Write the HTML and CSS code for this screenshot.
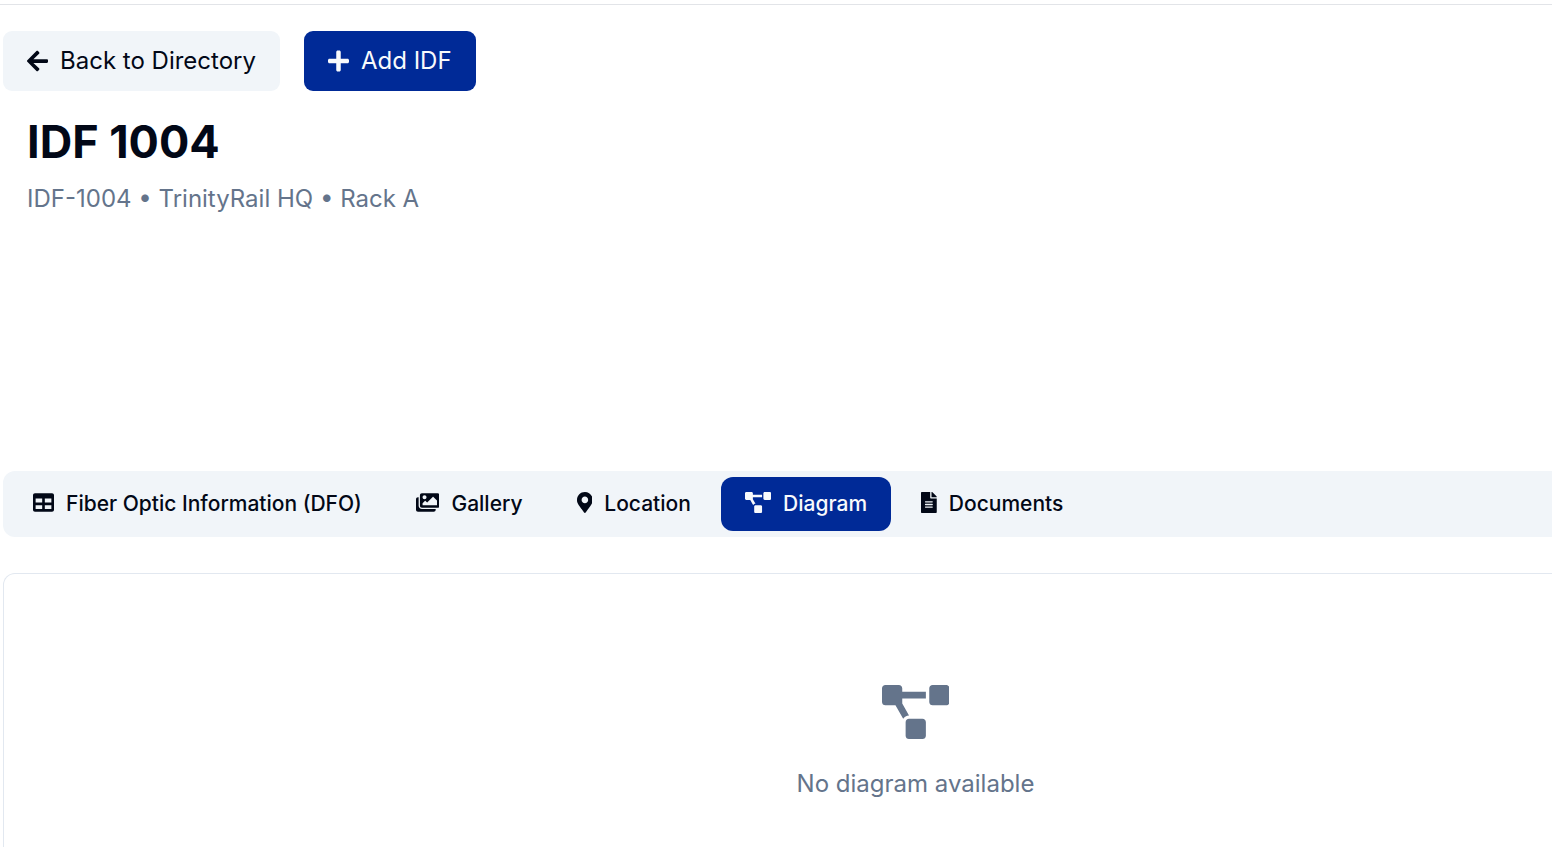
FILE: index.html
```html
<!DOCTYPE html>
<html lang="en">
<head>
<meta charset="utf-8">
<meta name="viewport" content="width=device-width, initial-scale=1">
<title>IDF 1004</title>
<link rel="stylesheet" href="styles.css">
</head>
<body>
<svg class="sprite" aria-hidden="true">
  <symbol id="diagram" viewBox="0 0 640 512"><path d="M384 320H256c-17.67 0-32 14.33-32 32v128c0 17.67 14.33 32 32 32h128c17.67 0 32-14.33 32-32V352c0-17.67-14.33-32-32-32zM192 32c0-17.67-14.33-32-32-32H32C14.33 0 0 14.33 0 32v128c0 17.67 14.33 32 32 32h95.72l73.16 128.04C211.98 300.98 232.4 288 256 288h.28L192 175.51V128h224V64H192V32zM608 0H480c-17.67 0-32 14.33-32 32v128c0 17.67 14.33 32 32 32h128c17.67 0 32-14.33 32-32V32c0-17.67-14.33-32-32-32z"/></symbol>
</svg>
<div class="page">
  <header class="topbar"></header>
  <main class="content">
    <div class="actions">
      <a class="button button-light" href="#directory">
        <svg class="icon icon-action" viewBox="0 0 448 512" aria-hidden="true"><path d="M257.5 445.1l-22.2 22.2c-9.4 9.4-24.6 9.4-33.9 0L7 273c-9.4-9.4-9.4-24.6 0-33.9L201.4 44.7c9.4-9.4 24.6-9.4 33.9 0l22.2 22.2c9.5 9.5 9.3 25-.4 34.3L136.6 216H424c13.3 0 24 10.7 24 24v32c0 13.3-10.7 24-24 24H136.6l120.5 114.8c9.8 9.3 10 24.8.4 34.3z"/></svg>
        Back to Directory
      </a>
      <button class="button button-primary" type="button">
        <svg class="icon icon-action" viewBox="0 0 448 512" aria-hidden="true"><path d="M416 208H272V64c0-17.67-14.33-32-32-32h-32c-17.67 0-32 14.33-32 32v144H32c-17.67 0-32 14.33-32 32v32c0 17.67 14.33 32 32 32h144v144c0 17.67 14.33 32 32 32h32c17.67 0 32-14.33 32-32V304h144c17.67 0 32-14.33 32-32v-32c0-17.67-14.33-32-32-32z"/></svg>
        Add IDF
      </button>
    </div>
    <section class="heading">
      <h1 class="title">IDF 1004</h1>
      <p class="subtitle">IDF-1004 • TrinityRail HQ • Rack A</p>
    </section>
    <div class="tabs" role="tablist">
      <button class="tab" type="button" role="tab" aria-selected="false">
        <svg class="icon icon-tab" viewBox="0 0 512 512" aria-hidden="true"><path d="M464 32H48C21.49 32 0 53.49 0 80v352c0 26.51 21.49 48 48 48h416c26.51 0 48-21.49 48-48V80c0-26.51-21.49-48-48-48zM224 416H64v-96h160v96zm0-160H64v-96h160v96zm224 160H288v-96h160v96zm0-160H288v-96h160v96z"/></svg>
        Fiber Optic Information (DFO)
      </button>
      <button class="tab" type="button" role="tab" aria-selected="false">
        <svg class="icon icon-tab" viewBox="0 0 576 512" aria-hidden="true"><path d="M480 416v16c0 26.51-21.49 48-48 48H48c-26.51 0-48-21.49-48-48V176c0-26.51 21.49-48 48-48h16v208c0 44.112 35.888 80 80 80h336zm96-80V80c0-26.51-21.49-48-48-48H144c-26.51 0-48 21.49-48 48v256c0 26.51 21.49 48 48 48h384c26.51 0 48-21.49 48-48zM256 128c0 26.51-21.49 48-48 48s-48-21.49-48-48 21.49-48 48-48 48 21.49 48 48zm-96 144l55.515-55.515c4.686-4.686 12.284-4.686 16.971 0L272 256l135.515-135.515c4.686-4.686 12.284-4.686 16.971 0L512 208v112H160v-48z"/></svg>
        Gallery
      </button>
      <button class="tab" type="button" role="tab" aria-selected="false">
        <svg class="icon icon-tab" viewBox="0 0 384 512" aria-hidden="true"><path d="M172.268 501.67C26.97 291.031 0 269.413 0 192 0 85.961 85.961 0 192 0s192 85.961 192 192c0 77.413-26.97 99.031-172.268 309.67-9.535 13.774-29.93 13.773-39.464 0zM192 272c44.183 0 80-35.817 80-80s-35.817-80-80-80-80 35.817-80 80 35.817 80 80 80z"/></svg>
        Location
      </button>
      <button class="tab tab-active" type="button" role="tab" aria-selected="true" aria-controls="diagram-panel" id="diagram-tab">
        <svg class="icon icon-tab" viewBox="0 0 640 512" aria-hidden="true"><use href="#diagram"/></svg>
        Diagram
      </button>
      <button class="tab" type="button" role="tab" aria-selected="false">
        <svg class="icon icon-tab" viewBox="0 0 384 512" aria-hidden="true"><path fill-rule="evenodd" d="M224 136V0H24C10.7 0 0 10.7 0 24v464c0 13.3 10.7 24 24 24h336c13.3 0 24-10.7 24-24V160H248c-13.2 0-24-10.8-24-24zM108 352h168c6.600 0 12 5.400 12 12v8c0 6.600-5.400 12-12 12H108c-6.600 0-12-5.400-12-12v-8c0-6.600 5.400-12 12-12zM108 288h168c6.600 0 12 5.400 12 12v8c0 6.600-5.400 12-12 12H108c-6.600 0-12-5.400-12-12v-8c0-6.600 5.400-12 12-12zM108 224h168c6.600 0 12 5.400 12 12v8c0 6.600-5.400 12-12 12H108c-6.600 0-12-5.400-12-12v-8c0-6.600 5.400-12 12-12zM384 121.900v6.100H256V0h6.100c6.400 0 12.500 2.500 17 7l97.900 98c4.500 4.500 7 10.600 7 16.900z"/></svg>
        Documents
      </button>
    </div>
    <section class="card" id="diagram-panel" role="tabpanel" aria-labelledby="diagram-tab">
      <svg class="icon icon-empty" viewBox="0 0 640 512" aria-hidden="true"><use href="#diagram"/></svg>
      <p class="empty-text">No diagram available</p>
    </section>
  </main>
</div>
</body>
</html>
```

FILE: styles.css
```css
* {
  box-sizing: border-box;
}

html,
body {
  height: 100%;
}

body {
  margin: 0;
  overflow: hidden;
  background: #fff;
  color: #020817;
  font-family: Inter, "Liberation Sans", sans-serif;
  font-size: 24px;
  line-height: 36px;
}

.sprite {
  position: absolute;
  width: 0;
  height: 0;
}

/* The content column runs on past the right edge of the window. */
.page {
  display: flex;
  flex-direction: column;
  width: calc(100% + 276px);
  min-height: 100%;
}

.topbar {
  height: 5px;
  border-bottom: 1px solid #e2e4e8;
}

.content {
  display: flex;
  flex: 1;
  flex-direction: column;
  padding: 26px 0 0 3px;
}

.actions {
  display: flex;
  gap: 24px;
}

.button,
.tab {
  display: inline-flex;
  align-items: center;
  gap: 12px;
  border: 0;
  color: inherit;
  font-family: inherit;
  text-decoration: none;
  white-space: nowrap;
  cursor: pointer;
}

.button {
  padding: 12px 24px;
  border-radius: 9px;
  font-size: 24px;
  line-height: 36px;
}

.button-light {
  background: #f1f5f9;
}

.button-primary {
  background: #002a97;
  color: #f8fafc;
}

.icon {
  flex: none;
  width: auto;
  fill: currentColor;
}

.icon-action {
  height: 24px;
}

.icon-tab {
  height: 21px;
  margin-bottom: 3px;
}

.icon-empty {
  height: 54px;
  color: #64748b;
}

.heading {
  min-height: 356px;
  padding: 24px 24px 0;
}

.title {
  margin: 0;
  font-size: 45px;
  font-weight: 700;
  line-height: 54px;
}

.subtitle {
  margin: 12px 0 0;
  color: #64748b;
}

.tabs {
  display: flex;
  gap: 6px;
  margin-top: 24px;
  padding: 6px;
  border-radius: 12px;
  background: #f1f5f9;
}

.tab {
  padding: 12px 24px;
  border-radius: 12px;
  background: transparent;
  font-size: 21px;
  font-weight: 500;
  line-height: 30px;
}

.tab-active {
  background: #002a97;
  color: #f8fafc;
}

.card {
  display: flex;
  flex: 1;
  flex-direction: column;
  align-items: center;
  gap: 27px;
  margin-top: 36px;
  padding: 111px 36px 0;
  border: 1px solid #e2e8f0;
  border-bottom: 0;
  border-radius: 12px 12px 0 0;
}

.empty-text {
  margin: 0;
  color: #64748b;
}
```
